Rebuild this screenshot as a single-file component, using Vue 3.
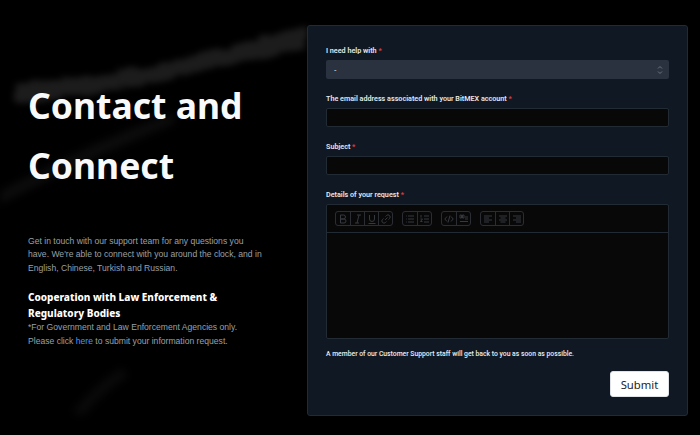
<script setup>
const groups = [
  ['b', 'i', 'u', 'link'],
  ['ul', 'ol'],
  ['code', 'quote'],
  ['left', 'center', 'right'],
]
const fields = [
  { label: 'The email address associated with your BitMEX account' },
  { label: 'Subject' },
]
</script>

<template>
  <div class="page">
    <svg class="backdrop" width="700" height="435" viewBox="0 0 700 435" aria-hidden="true">
      <defs>
        <filter id="soft" x="-10%" y="-80%" width="120%" height="260%" color-interpolation-filters="sRGB">
          <feTurbulence type="fractalNoise" baseFrequency="0.05 0.18" numOctaves="3" seed="4" result="n" />
          <feDisplacementMap in="SourceGraphic" in2="n" scale="10" />
          <feGaussianBlur stdDeviation="3" />
        </filter>
        <filter id="softer" x="-30%" y="-50%" width="160%" height="200%" color-interpolation-filters="sRGB"><feGaussianBlur stdDeviation="4" /></filter>
      </defs>
      <path d="M15 84 C70 78 140 70 190 56 C240 44 280 32 307 26 L307 50 C260 58 200 70 140 86 C90 96 50 100 15 104Z" fill="#1c1c1c" filter="url(#soft)" />
      <path d="M0 192 C60 160 120 132 172 114 L176 122 C120 146 60 172 0 204Z" fill="#0d0d0d" filter="url(#softer)" />
      <path d="M72 412 C88 394 104 378 122 368 L128 376 C110 388 94 402 84 416Z" fill="#0a0a0a" filter="url(#softer)" />
    </svg>

    <section class="intro">
      <h1>Contact and Connect</h1>
      <p class="lead">Get in touch with our support team for any questions you have. We're able to connect with you around the clock, and in English, Chinese, Turkish and Russian.</p>
      <h2>Cooperation with Law Enforcement &amp; Regulatory Bodies</h2>
      <p class="note">*For Government and Law Enforcement Agencies only. Please click <a href="#">here</a> to submit your information request.</p>
    </section>

    <form class="card" @submit.prevent>
      <label class="lbl">I need help with <span class="req">*</span></label>
      <div class="select">
        <span>-</span>
        <svg width="6" height="10" viewBox="0 0 6 10" fill="none" stroke="#6a7581" stroke-width="1"><path d="M1 3.500 3 1.500 5 3.500M1 6.500 3 8.500 5 6.500" /></svg>
      </div>

      <template v-for="f in fields" :key="f.label">
        <label class="lbl">{{ f.label }} <span class="req">*</span></label>
        <div class="input"></div>
      </template>

      <label class="lbl">Details of your request <span class="req">*</span></label>
      <div class="editor">
        <div class="toolbar">
          <div v-for="(g, i) in groups" :key="i" class="group">
            <span v-for="b in g" :key="b" class="tool">
              <svg width="10" height="10" viewBox="0 0 10 10" fill="none" stroke="#36393f" stroke-width="1">
                <path v-if="b === 'b'" d="M2.500 1h3a2 2 0 0 1 0 4h-3zM2.500 5h3.500a2 2 0 0 1 0 4h-3.500z" />
                <path v-else-if="b === 'i'" d="M4 1h4M2 9h4M6 1 4 9" />
                <path v-else-if="b === 'u'" d="M2.500 1v4a2.500 2.500 0 0 0 5 0v-4M1.500 9.500h7" />
                <path v-else-if="b === 'link'" d="M4 6 6.500 3.500M4.500 2.500l1-1a2 2 0 0 1 3 3l-1 1M5.500 7.500l-1 1a2 2 0 0 1-3-3l1-1" />
                <path v-else-if="b === 'ul'" d="M3 2h6M3 5h6M3 8h6M1 2h.8M1 5h.8M1 8h.8" />
                <path v-else-if="b === 'ol'" d="M4 2h5M4 5h5M4 8h5M1 1v2.500M.5 5h2L.5 7.500h2" />
                <path v-else-if="b === 'code'" d="M3 2.500.8 5 3 7.500M7 2.500 9.200 5 7 7.500M6 1.500 4 8.500" />
                <path v-else-if="b === 'quote'" d="M1 1v3h1.500v-3zM3.500 1v3h1.500v-3zM6 3h3M6 5h3M1 7.500h8" />
                <path v-else-if="b === 'left'" d="M1 2h8M1 4h5M1 6h8M1 8h5" />
                <path v-else-if="b === 'center'" d="M1 2h8M2.500 4h5M1 6h8M2.500 8h5" />
                <path v-else d="M1 2h8M4 4h5M1 6h8M4 8h5" />
              </svg>
            </span>
          </div>
        </div>
        <div class="body"></div>
      </div>

      <p class="hint">A member of our Customer Support staff will get back to you as soon as possible.</p>
      <div class="actions"><button type="submit">Submit</button></div>
    </form>
  </div>
</template>

<style>
body { background: #000; }
</style>

<style scoped>
.page {
  position: relative;
  width: 700px;
  height: 435px;
  overflow: hidden;
  background: #000;
  display: flex;
  align-items: flex-start;
  font-family: "Noto Sans", "Open Sans", sans-serif;
}
.backdrop { position: absolute; left: 0; top: 0; }
.intro {
  position: relative;
  width: 307px;
  flex: none;
  box-sizing: border-box;
  padding: 75px 42px 0 28px;
}
h1 {
  margin: 0 0 40px;
  color: #f8f9fa;
  font-size: 35.5px;
  line-height: 60px;
  font-weight: 700;
}
.lead, .note {
  margin: 0;
  color: #98a0aa;
  font: 8.6px/13.4px "Liberation Sans", Arial, sans-serif;
}
h2 {
  margin: 14px 0 0;
  color: #fff;
  font-size: 10px;
  line-height: 16px;
  font-weight: 800;
}
.note a { color: #3a9bff; text-decoration: none; }
.card {
  position: relative;
  width: 381px;
  height: 391px;
  flex: none;
  margin-top: 25px;
  box-sizing: border-box;
  padding: 19px 18px 0 18px;
  background: #101823;
  border: 1px solid #212a35;
  border-radius: 3px;
  display: flex;
  flex-direction: column;
}
.lbl {
  color: #e6e8ea;
  font-family: Roboto, "Noto Sans", sans-serif;
  font-size: 7.2px;
  line-height: 12px;
  font-weight: 600;
  margin-bottom: 3px;
}
.req { color: #e04040; }
.select {
  height: 19px;
  margin-bottom: 14px;
  padding: 0 6px 0 8px;
  background: #29323e;
  border-radius: 2px;
  color: #c6cad0;
  font-size: 8px;
  display: flex;
  align-items: center;
  justify-content: space-between;
}
.input {
  height: 19px;
  box-sizing: border-box;
  margin-bottom: 14px;
  background: #080808;
  border: 1px solid #222a33;
  border-radius: 2px;
}
.editor {
  height: 135px;
  box-sizing: border-box;
  background: #080808;
  border: 1px solid #222a33;
  border-radius: 2px;
  display: flex;
  flex-direction: column;
}
.toolbar {
  height: 28px;
  box-sizing: border-box;
  padding: 6px 8px 0;
  border-bottom: 1px solid #222a33;
  display: flex;
  gap: 9px;
}
.group {
  height: 15px;
  display: flex;
  box-sizing: border-box;
  border: 1px solid #2a2e34;
  border-radius: 3px;
}
.tool {
  width: 14px;
  box-sizing: border-box;
  display: flex;
  align-items: center;
  justify-content: center;
  border-left: 1px solid #2a2e34;
}
.tool:first-child { border-left: 0; }
.body { flex: 1; }
.hint {
  margin: 9px 0 0;
  color: #eceef0;
  font-family: Roboto, "Noto Sans", sans-serif;
  font-size: 6.8px;
  line-height: 12px;
  font-weight: 500;
}
.actions { display: flex; justify-content: flex-end; margin-top: 11px; }
button {
  width: 59px;
  height: 26px;
  padding: 0;
  background: #fff;
  border: 1px solid #dfe3e8;
  border-radius: 3px;
  color: #212529;
  font: 400 11.3px "Noto Sans", sans-serif;
}
</style>
